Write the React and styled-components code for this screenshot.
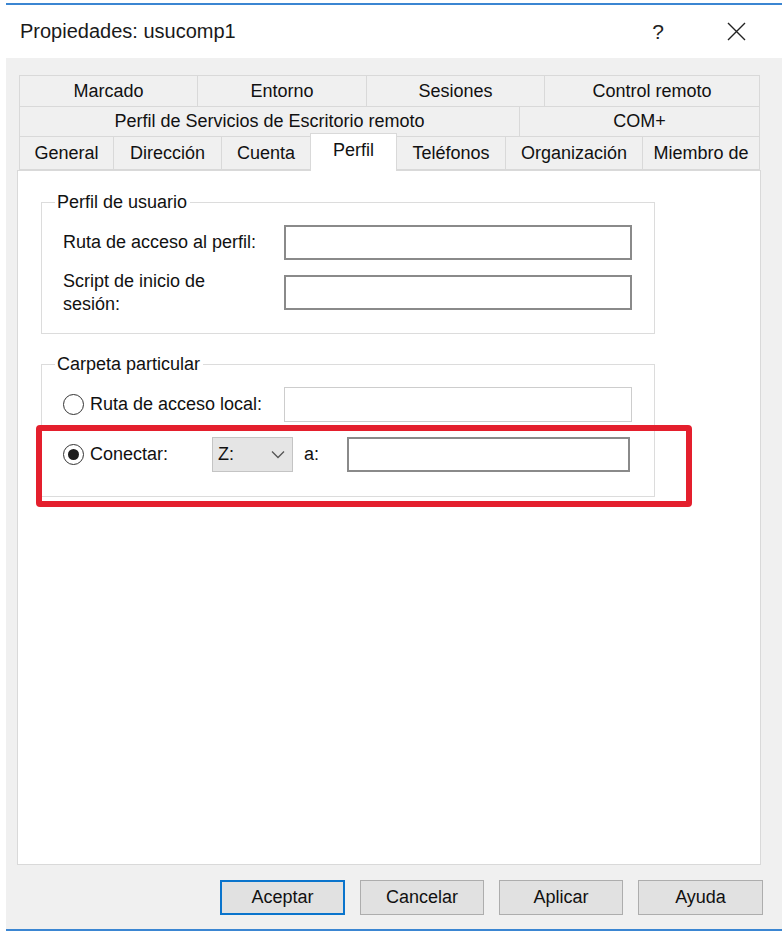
import styled, { createGlobalStyle } from 'styled-components';

const GlobalStyle = createGlobalStyle`
  body {
    margin: 0;
    background: #ffffff;
    font-family: "Liberation Sans", Arial, sans-serif;
    color: #111;
  }
`;

const Dialog = styled.div`
  margin-left: 6px;
  width: 776px;
  height: 940px;
  display: flex;
  flex-direction: column;
`;

const BlueLine = styled.div`
  height: 2px;
  background: #3b86d2;
  margin-top: ${(p) => p.top || 0}px;
`;

const TitleBar = styled.div`
  height: 53px;
  display: flex;
  align-items: center;
  padding: 0 23px 0 14px;
  background: #fff;
`;

const Title = styled.div`
  flex: 1;
  font-size: 20px;
  color: #1a1a1a;
`;

const TitleButton = styled.div`
  width: 46px;
  height: 34px;
  display: flex;
  align-items: center;
  justify-content: center;
  font-size: 21px;
  color: #222;
  margin-left: ${(p) => p.gap || 0}px;
`;

const Body = styled.div`
  background: #f0f0f0;
  padding: 18px 21px 14px 11px;
`;

const Tabs = styled.div`
  margin: 0 3px;
`;

const TabRow = styled.div`
  display: grid;
  grid-template-columns: ${(p) => p.cols};
  height: ${(p) => p.h}px;
  margin-top: -1px;
`;

const Tab = styled.div`
  border: 1px solid #d9d9d9;
  margin-left: -1px;
  display: flex;
  align-items: center;
  justify-content: center;
  font-size: 18px;
  background: #f0f0f0;
  ${(p) =>
    p.active &&
    `
    background: #fff;
    border-bottom: none;
    margin-top: -3px;
    margin-bottom: -1px;
    position: relative;
    z-index: 1;
    align-items: flex-start;
    padding-top: 6px;
  `}
`;

const Panel = styled.div`
  position: relative;
  height: 695px;
  box-sizing: border-box;
  background: #fff;
  border: 1px solid #d9d9d9;
  padding: 20px 0 0 23px;
`;

const Group = styled.fieldset`
  width: 614px;
  box-sizing: border-box;
  margin: 0 0 ${(p) => p.mb || 0}px 0;
  border: 1px solid #dcdcdc;
  padding: 12px 22px ${(p) => p.pb}px 21px;
`;

const Legend = styled.legend`
  font-size: 18px;
  line-height: 22px;
  padding: 0 3px 0 2px;
  margin-left: -8px;
`;

const Rows = styled.div`
  display: flex;
  flex-direction: column;
  gap: 15px;
`;

const Row = styled.div`
  display: flex;
  align-items: center;
  height: 35px;
`;

const Label = styled.div`
  width: ${(p) => p.w || 221}px;
  font-size: 18px;
  line-height: 23px;
  flex-shrink: 0;
`;

const TextBox = styled.div`
  width: ${(p) => p.w || 348}px;
  height: 35px;
  box-sizing: border-box;
  background: #fff;
  border: ${(p) => (p.disabled ? '1px solid #cdcdcd' : '2px solid #8a8a8a')};
`;

const Radio = styled.span`
  width: 21px;
  height: 21px;
  box-sizing: border-box;
  border: 1.5px solid #333;
  border-radius: 50%;
  display: flex;
  align-items: center;
  justify-content: center;
  margin-right: 6px;
  flex-shrink: 0;
  &::after {
    content: '';
    width: 11px;
    height: 11px;
    border-radius: 50%;
    background: ${(p) => (p.checked ? '#1c1c1c' : 'transparent')};
  }
`;

const RadioLabel = styled.div`
  display: flex;
  align-items: center;
  width: ${(p) => p.w}px;
  font-size: 18px;
  flex-shrink: 0;
`;

const Select = styled.div`
  width: 81px;
  height: 35px;
  box-sizing: border-box;
  background: #e5e5e5;
  border: 1px solid #c4c4c4;
  display: flex;
  align-items: center;
  justify-content: space-between;
  padding: 0 7px 0 5px;
  font-size: 18px;
`;

const SmallText = styled.span`
  font-size: 18px;
  margin: 0 ${(p) => p.mr}px 0 11px;
`;

const Highlight = styled.div`
  position: absolute;
  left: 18px;
  top: 254px;
  width: 656px;
  height: 82px;
  box-sizing: border-box;
  border: 6px solid #e41f2d;
  border-radius: 4px;
`;

const ButtonBar = styled.div`
  display: flex;
  justify-content: flex-end;
  gap: 15px;
  margin-top: 15px;
  margin-right: -2px;
`;

const Button = styled.div`
  width: ${(p) => p.w || 124}px;
  height: 35px;
  box-sizing: border-box;
  background: #e1e1e1;
  border: ${(p) => (p.primary ? '2px solid #0a74cc' : '1px solid #adadad')};
  display: flex;
  align-items: center;
  justify-content: center;
  font-size: 18px;
  color: #111;
`;

const row1 = ['Marcado', 'Entorno', 'Sesiones', 'Control remoto'];
const row2 = ['Perfil de Servicios de Escritorio remoto', 'COM+'];
const row3 = ['General', 'Dirección', 'Cuenta', 'Perfil', 'Teléfonos', 'Organización', 'Miembro de'];

const Chevron = () => (
  <svg width="14" height="9" viewBox="0 0 14 9">
    <path d="M1 1.5 L7 7.5 L13 1.5" fill="none" stroke="#555" strokeWidth="1.3" />
  </svg>
);

const CloseIcon = () => (
  <svg width="19" height="19" viewBox="0 0 19 19">
    <path d="M1 1 L18 18 M18 1 L1 18" stroke="#222" strokeWidth="1.4" />
  </svg>
);

const App = () => {
  return (
    <>
      <GlobalStyle />
      <Dialog>
        <BlueLine top={3} />
        <TitleBar>
          <Title>Propiedades: usucomp1</Title>
          <TitleButton>?</TitleButton>
          <TitleButton gap={32}>
            <CloseIcon />
          </TitleButton>
        </TitleBar>
        <Body>
          <Tabs>
            <TabRow h={32} cols="178px 169px 178px 215px">
              {row1.map((t) => (
                <Tab key={t}>{t}</Tab>
              ))}
            </TabRow>
            <TabRow h={31} cols="500px 240px">
              {row2.map((t) => (
                <Tab key={t}>{t}</Tab>
              ))}
            </TabRow>
            <TabRow h={34} cols="94px 108px 89px 86px 109px 137px 117px">
              {row3.map((t) => (
                <Tab key={t} active={t === 'Perfil'}>
                  {t}
                </Tab>
              ))}
            </TabRow>
          </Tabs>
          <Panel>
            <Group mb={19} pb={23}>
              <Legend>Perfil de usuario</Legend>
              <Rows>
                <Row>
                  <Label>Ruta de acceso al perfil:</Label>
                  <TextBox />
                </Row>
                <Row>
                  <Label>
                    Script de inicio de
                    <br />
                    sesión:
                  </Label>
                  <TextBox />
                </Row>
              </Rows>
            </Group>
            <Group pb={24}>
              <Legend>Carpeta particular</Legend>
              <Rows>
                <Row>
                  <RadioLabel w={221}>
                    <Radio />
                    Ruta de acceso local:
                  </RadioLabel>
                  <TextBox disabled />
                </Row>
                <Row>
                  <RadioLabel w={149}>
                    <Radio checked />
                    Conectar:
                  </RadioLabel>
                  <Select>
                    Z:
                    <Chevron />
                  </Select>
                  <SmallText mr={28}>a:</SmallText>
                  <TextBox w={283} />
                </Row>
              </Rows>
            </Group>
            <Highlight />
          </Panel>
          <ButtonBar>
            <Button primary w={125}>Aceptar</Button>
            <Button>Cancelar</Button>
            <Button>Aplicar</Button>
            <Button w={125}>Ayuda</Button>
          </ButtonBar>
        </Body>
        <BlueLine />
      </Dialog>
    </>
  );
};

export default App;
